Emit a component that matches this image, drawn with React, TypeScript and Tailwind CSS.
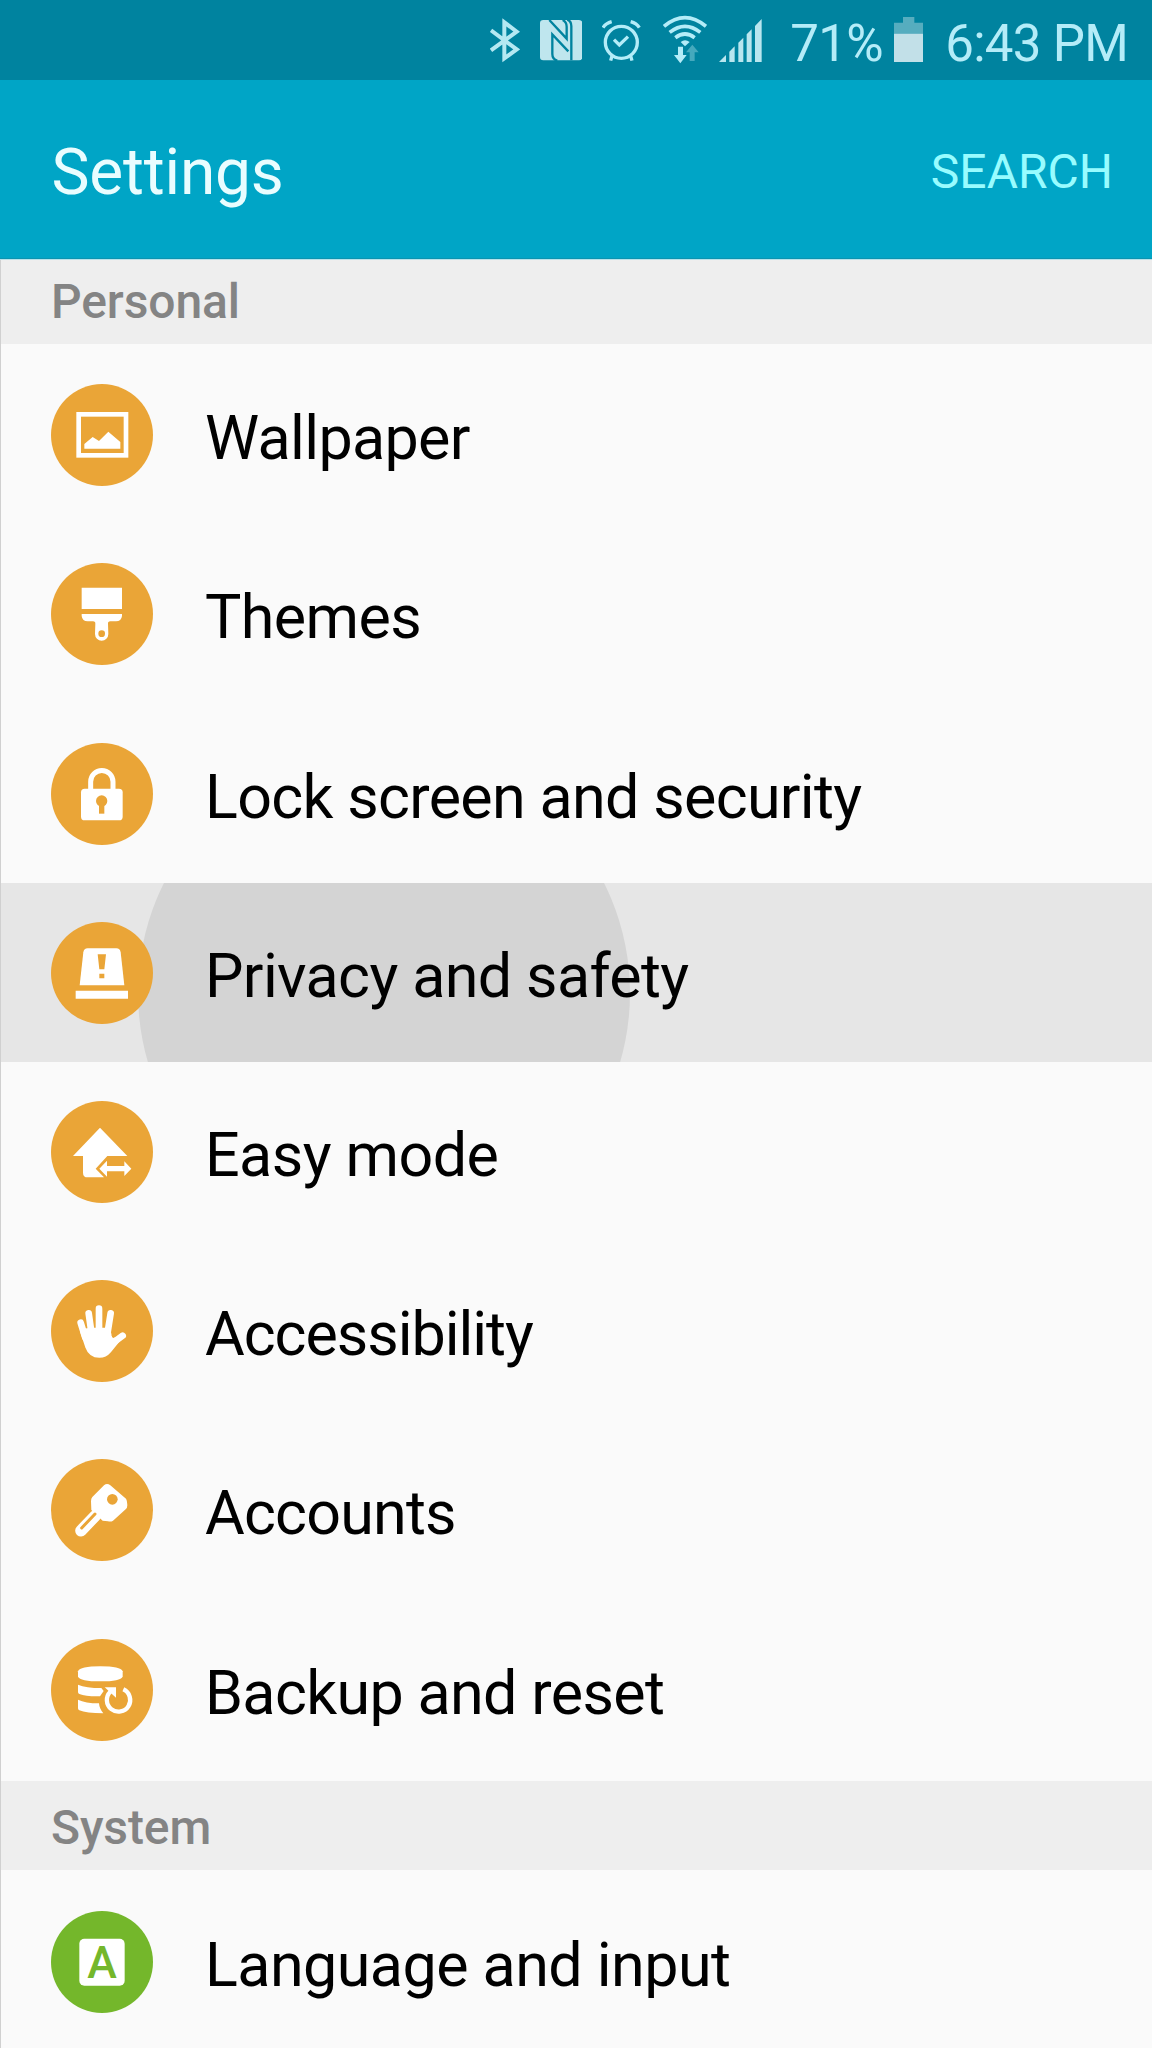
import type { ReactNode } from "react";

type Item = {
  label: string;
  icon: ReactNode;
  color: string;
  tracking: string;
  pressed?: boolean;
};

// Glyphs share one viewBox, centred on the middle of the badge
const WallpaperGlyph = (
  <>
    <rect x="-70" y="-62" width="142" height="123" fill="none" stroke="#fff" strokeWidth="14" />
    <path d="M-53 41V27L-28 6L-9 18L19 -10L55 21V41Z" fill="#fff" />
  </>
);

const ThemesGlyph = (
  <>
    <path d="M-61 -79H60V-15H-61Z" fill="#fff" />
    <path d="M-61 0H60V6Q58 22 42 22H25Q17 22 18 30L19 60A20 20 0 0 1 -21 60L-20 30Q-19 22 -27 22H-43Q-59 22 -61 6Z" fill="#fff" />
    <circle cx="-1" cy="59" r="10" fill="#eaa537" />
  </>
);

const LockGlyph = (
  <>
    <path d="M-34 -10V-37A33.500 33.500 0 0 1 33 -37V-10" fill="none" stroke="#fff" strokeWidth="15" />
    <rect x="-63" y="-16" width="125" height="95" rx="11" fill="#fff" />
    <circle cx="-1" cy="21" r="17" fill="#eaa537" />
    <path d="M-9 25H7V59H-9Z" fill="#eaa537" />
  </>
);

const PrivacyGlyph = (
  <>
    <path d="M-67 37L-56 -62Q-54 -74 -43 -74H43Q54 -74 56 -62L67 37Z" fill="#fff" />
    <path d="M-79 53H78V77H-79Z" fill="#fff" />
    <path d="M-13 -56H12L7 -11H-8ZM-8 2H7V16H-8Z" fill="#eaa537" />
  </>
);

const EasyModeGlyph = (
  <>
    <path d="M-6 -73L76 12H16L-19 50L6 76H-43Q-57 76 -57 62V12H-87Z" fill="#fff" />
    <path d="M-8 50L15 26V42H67V28L88 50L67 72V58H15V74Z" fill="#fff" />
  </>
);

const AccessibilityGlyph = (
  <g fill="none" stroke="#fff" strokeWidth="20" strokeLinecap="round" strokeLinejoin="round">
    <path d="M-64 -25L-50 20M-40 -53L-31 10M-9 -67V10M26 -53L16 10" />
    <path d="M62 14L34 35" />
    <path d="M-55 3L-41 45Q-32 70 -8 70Q8 70 19 57L42 29Q24 36 19 15L16 0L-31 0Z" fill="#fff" />
  </g>
);

const AccountsGlyph = (
  <>
    <path d="M-20 17L-63 62" stroke="#fff" strokeWidth="35" strokeLinecap="round" />
    <path d="M-29 -39L6 -74Q15 -82 25 -74L72 -34Q75 -30 76 -14Q76 -6 71 -2L33 32Q27 36 18 34L2 32L-32 0L-33 -26Q-33 -35 -29 -39Z" fill="#fff" />
    <path d="M-21 12L-61 54" stroke="#eaa537" strokeWidth="9" strokeLinecap="round" />
    <circle cx="31" cy="-32" r="16" fill="#eaa537" />
  </>
);

const BackupGlyph = (
  <>
    <path d="M-72 -56Q-66 -71 -5 -71Q56 -71 62 -56V-40Q56 -26 -5 -26Q-66 -26 -72 -40Z" fill="#fff" />
    <path d="M-72 -16Q-48 -6 -2 -6L5 3L-6 19Q-48 20 -68 12Q-72 10 -72 6Z" fill="#fff" />
    <path d="M-72 29Q-50 40 -9 40Q-8 56 4 70Q-48 70 -68 61Q-72 59 -72 55Z" fill="#fff" />
    <path d="M64 -2A35 35 0 1 1 25 5" fill="none" stroke="#fff" strokeWidth="13" />
    <path d="M8 -8H42V23Z" fill="#fff" />
  </>
);

const LanguageGlyph = (
  <>
    <rect x="-68" y="-70" width="136" height="141" rx="15" fill="#fff" />
    <text x="0" y="48" textAnchor="middle" fontSize="134" fontWeight="500" fill="#74b72b" className="font-['Roboto',sans-serif]">
      A
    </text>
  </>
);

const personal: Item[] = [
  { label: "Wallpaper", icon: WallpaperGlyph, color: "bg-[#eaa537]", tracking: "tracking-[-0.65px]" },
  { label: "Themes", icon: ThemesGlyph, color: "bg-[#eaa537]", tracking: "tracking-[-0.6px]" },
  { label: "Lock screen and security", icon: LockGlyph, color: "bg-[#eaa537]", tracking: "tracking-[-0.68px]" },
  { label: "Privacy and safety", icon: PrivacyGlyph, color: "bg-[#eaa537]", tracking: "tracking-[-0.63px]", pressed: true },
  { label: "Easy mode", icon: EasyModeGlyph, color: "bg-[#eaa537]", tracking: "tracking-[-0.55px]" },
  { label: "Accessibility", icon: AccessibilityGlyph, color: "bg-[#eaa537]", tracking: "tracking-[-1.05px]" },
  { label: "Accounts", icon: AccountsGlyph, color: "bg-[#eaa537]", tracking: "tracking-[-0.8px]" },
  { label: "Backup and reset", icon: BackupGlyph, color: "bg-[#eaa537]", tracking: "tracking-[-0.65px]" },
];

const system: Item[] = [
  { label: "Language and input", icon: LanguageGlyph, color: "bg-[#74b72b]", tracking: "tracking-[-0.55px]" },
];

function StatusBar() {
  return (
    <div className="flex h-20 shrink-0 items-start justify-end bg-[#00839f] pr-[24px] text-[#b4ecf8]">
      <svg viewBox="62 45 90 147" className="mt-[15px] h-[49px] w-[30px]" fill="none" stroke="#b4e8f2" strokeWidth="12">
        <path d="M65 91L142 148L105 175V67L142 95L65 151" />
      </svg>
      <svg viewBox="212 45 127 147" className="mt-[15px] ml-5 h-[49px] w-[42.330px]">
        <rect x="212" y="60" width="127" height="121" rx="10" fill="#bfe6ee" />
        <g fill="none" stroke="#00839f" strokeWidth="7">
          <path d="M240 60L292 116V80Q292 66 280 60" />
          <path d="M306 181V78Q306 64 294 59" />
          <path d="M264 182Q249 178 249 162V103L297 154" />
        </g>
      </svg>
      <svg viewBox="400 45 115 147" className="mt-[15px] ml-[20.330px] h-[49px] w-[38.330px]" fill="none" stroke="#b4ecf8" strokeWidth="10">
        <circle cx="458" cy="127" r="48" />
        <path d="M436 119L452 135L478 110M403 83Q411 70 429 65M512 83Q504 70 486 65M430 168L426 182M486 168L490 182" />
      </svg>
      <svg viewBox="582 45 131 147" className="mt-[15px] ml-[22.330px] h-[49px] w-[43.670px]" fill="none" stroke="#b4ecf8" strokeWidth="11">
        <path d="M585 79Q648 27 711 79M602 97Q648 61 694 97M619 113Q648 91 677 113" />
        <path d="M635 126Q648 115 662 126L648 139Z" fill="#b4ecf8" stroke="none" />
        <path d="M627 140H642V165H653L634 190L615 165H627Z" fill="#b4ecf8" stroke="none" />
        <path d="M662 183V157H651L670 134L689 157H677V183Z" fill="#45a9bd" stroke="none" />
      </svg>
      <svg viewBox="750 45 130 147" className="mt-[15px] ml-[12.330px] h-[49px] w-[43.330px]" fill="#b9e6ef">
        <path d="M750 186L771 165V186ZM781 186V155L797 139V186ZM808 186V128L823 113V186ZM833 186V103L848 88V186ZM858 186V78L878 57V186Z" />
      </svg>
      <span className="mt-[18px] ml-[28px] text-[51px] leading-[52px] tracking-[-0.7px]">71%</span>
      <svg viewBox="345 45 88 147" className="mt-[15px] ml-[11px] h-[49px] w-[29.330px]">
        <path d="M372 51H406V68H433V101H345V68H372Z" fill="#56adbf" />
        <path d="M345 101H433V186H345Z" fill="#c2e0e8" />
      </svg>
      <span className="mt-[18px] ml-[22px] text-[51px] leading-[52px] tracking-[-0.7px]">6:43 PM</span>
    </div>
  );
}

function SectionTitle({ children, className }: { children: string; className: string }) {
  return (
    <h2 className={`flex items-center bg-[#eeeeee] pl-[51px] text-[48px] leading-none font-medium tracking-[-0.1px] text-[#848484] ${className}`}>
      {children}
    </h2>
  );
}

function SettingRow({ item }: { item: Item }) {
  return (
    <li className={`relative flex h-[179.200px] items-center overflow-hidden pl-[51px] ${item.pressed ? "bg-[#e6e6e6]" : ""}`}>
      {item.pressed && (
        <span className="absolute top-[-136px] left-[138px] size-[492px] rounded-full bg-[#d4d4d4]" />
      )}
      <span className={`relative size-[102px] shrink-0 rounded-full ${item.color}`}>
        <svg viewBox="-153 -153 306 306" className="size-full" fill="none">
          {item.icon}
        </svg>
      </span>
      <span className={`relative ml-[52px] pt-[7px] text-[61px] leading-none whitespace-nowrap text-black ${item.tracking}`}>
        {item.label}
      </span>
    </li>
  );
}

export default function App() {
  return (
    <div className="relative flex h-[2048px] w-[1152px] flex-col overflow-hidden bg-[#fafafa] font-['Roboto',sans-serif]">
      <StatusBar />
      <header className="flex h-[179px] shrink-0 items-center justify-between border-b border-[#0b93b0] bg-[#00a5c6] pt-[7px] pr-[39px] pl-[51.500px]">
        <h1 className="text-[64px] leading-none tracking-[-0.2px] text-[#e9fdff]">Settings</h1>
        <button className="pb-0.5 text-[48px] leading-none text-[#98fcff]">SEARCH</button>
      </header>
      <SectionTitle className="h-[85px] shrink-0 border-t border-[#b5e2ea]">Personal</SectionTitle>
      <ul className="shrink-0 pt-[1.700px]">
        {personal.map((item) => (
          <SettingRow key={item.label} item={item} />
        ))}
      </ul>
      <SectionTitle className="mt-[2px] h-[89px] shrink-0 pt-[5px]">System</SectionTitle>
      <ul className="shrink-0 pt-[2px]">
        {system.map((item) => (
          <SettingRow key={item.label} item={item} />
        ))}
      </ul>
      {/* Screen edge */}
      <span className="absolute top-[260px] bottom-0 left-0 w-px bg-[#d0d0d0]" />
    </div>
  );
}
